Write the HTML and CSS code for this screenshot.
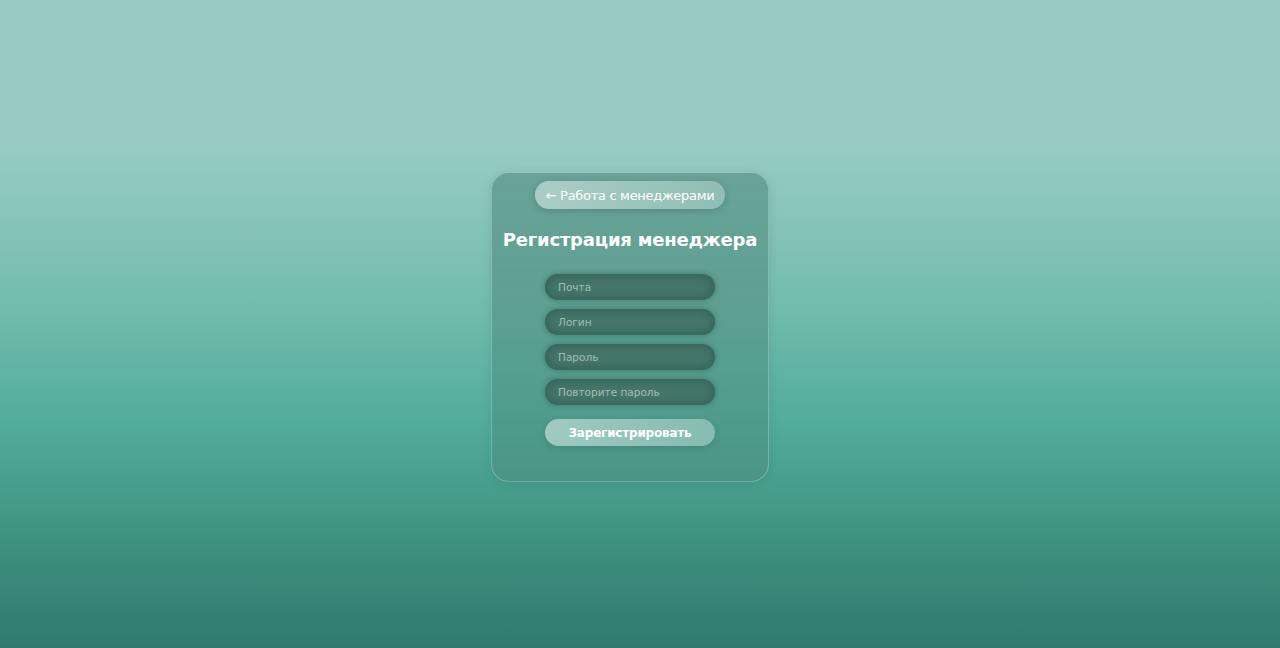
FILE: index.html
```html
<!DOCTYPE html>
<html lang="ru">
<head>
<meta charset="utf-8">
<title>Регистрация менеджера</title>
<link rel="stylesheet" href="styles.css">
</head>
<body>
<main class="page">
  <section class="card">
    <a class="back" href="#">← Работа с менеджерами</a>
    <h1 class="title">Регистрация менеджера</h1>
    <form class="form">
      <input class="field" type="email" placeholder="Почта">
      <input class="field" type="text" placeholder="Логин">
      <input class="field" type="password" placeholder="Пароль">
      <input class="field" type="password" placeholder="Повторите пароль">
      <button class="submit" type="button">Зарегистрировать</button>
    </form>
  </section>
</main>
</body>
</html>
```
FILE: styles.css
```css
* { box-sizing: border-box; }
html, body { margin: 0; height: 100%; }
body {
  font-family: "DejaVu Sans", "Noto Sans", sans-serif;
  background: linear-gradient(180deg, #97cbc3 0px, #97cbc3 150px, #74bdae 300px, #52ad9a 420px, #3f917f 540px, #2f7a6d 648px);
}
.page {
  height: 648px;
  display: flex;
  align-items: center;
  justify-content: center;
  padding-top: 6px;
  padding-right: 20px;
}
.card {
  width: 278px;
  height: 310px;
  border-radius: 18px;
  background: linear-gradient(180deg, rgba(55,115,103,0.45), rgba(80,130,120,0.35));
  border: 1px solid rgba(200,235,228,0.35);
  box-shadow: 0 2px 10px rgba(30,80,70,0.15);
  display: flex;
  flex-direction: column;
  align-items: center;
  padding-top: 8px;
}
.back {
  display: flex;
  align-items: center;
  justify-content: center;
  width: 190px;
  height: 28px;
  border-radius: 14px;
  background: linear-gradient(90deg, rgba(225,242,238,0.55), rgba(220,240,236,0.35));
  box-shadow: 0 2px 6px rgba(30,70,60,0.25);
  color: #fff;
  font-size: 13px;
  text-decoration: none;
  letter-spacing: -0.3px;
}
.title {
  margin: 20px 0 0;
  color: #fff;
  font-size: 18px;
  font-weight: bold;
  line-height: 22px;
  letter-spacing: -0.2px;
}
.form {
  margin-top: 23px;
  display: flex;
  flex-direction: column;
  gap: 9px;
  width: 170px;
}
.field {
  height: 26px;
  border: none;
  border-radius: 13px;
  background: #46766b;
  box-shadow: inset 0 0 7px 4px rgba(40,85,75,0.45), 0 0 5px 1px rgba(45,95,85,0.45);
  padding: 0 13px;
  font-family: inherit;
  font-size: 10.5px;
  color: #fff;
  outline: none;
}
.field::placeholder { color: #a0beb6; }
.submit {
  margin-top: 5px;
  height: 27px;
  border: none;
  border-radius: 14px;
  background: linear-gradient(90deg, rgba(225,242,238,0.55), rgba(225,242,238,0.38));
  box-shadow: 0 2px 6px rgba(30,70,60,0.2);
  color: #fff;
  font-family: inherit;
  font-size: 12px;
  font-weight: bold;
  letter-spacing: -0.2px;
}
```
